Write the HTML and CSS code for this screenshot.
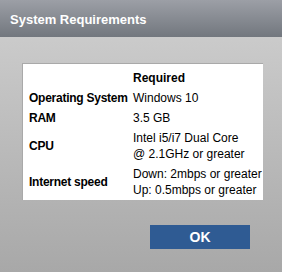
FILE: index.html
```html
<!DOCTYPE html>
<html lang="en">

<head>
    <meta charset="UTF-8" />
    <title>System Requirements</title>
    <meta name="viewport" content="width=device-width, initial-scale=1" />
    <link rel="stylesheet" href="styles.css">
</head>

<body>
    <div class="dialog">
        <div class="titlebar">System Requirements</div>

        <div class="painel">
            <table class="reqs">
                <tr>
                    <th></th>
                    <th class="col-head">Required</th>
                </tr>
                <tr>
                    <th>Operating System</th>
                    <td>Windows 10</td>
                </tr>
                <tr>
                    <th>RAM</th>
                    <td>3.5 GB</td>
                </tr>
                <tr>
                    <th>CPU</th>
                    <td>Intel i5/i7 Dual Core<br>@ 2.1GHz or greater</td>
                </tr>
                <tr>
                    <th>Internet speed</th>
                    <td>Down: 2mbps or greater<br>Up: 0.5mbps or greater</td>
                </tr>
            </table>
        </div>

        <div class="acoes">
            <button class="btn-ok">OK</button>
        </div>
    </div>
</body>

</html>
```

FILE: styles.css
```css
body,
html {
    margin: 0;
    padding: 0;
    height: 100%;
    font-family: "Liberation Sans", Arial, sans-serif;
    color: #000;
}

.dialog {
    width: 282px;
    height: 272px;
    background: linear-gradient(#d0d0d0, #a8a8a8);
}

.titlebar {
    height: 37px;
    box-sizing: border-box;
    padding: 12px 0 0 10px;
    font-size: 13px;
    font-weight: bold;
    color: #fff;
    background: linear-gradient(#9c9fa6, #72777e);
}

.painel {
    margin: 26px 0 0 22px;
    width: 241px;
    height: 137px;
    box-sizing: border-box;
    background: #fff;
    border-top: 1px solid #a9a9a9;
    border-left: 1px solid #a9a9a9;
    padding: 4px 0 0 6px;
}

.reqs {
    border-collapse: collapse;
    font-size: 12px;
    line-height: 16px;
    white-space: nowrap;
}

.reqs th,
.reqs td {
    padding: 2px 0;
    text-align: left;
    vertical-align: middle;
}

.reqs th {
    font-weight: bold;
    width: 104px;
    letter-spacing: -0.25px;
}

.reqs th.col-head {
    letter-spacing: 0;
}

.acoes {
    padding: 25px 0 0 150px;
}

.btn-ok {
    width: 100px;
    height: 24px;
    border: none;
    background-color: #2f5b93;
    color: #fff;
    font-family: "Liberation Sans", Arial, sans-serif;
    font-size: 14px;
    font-weight: bold;
    padding: 0;
}
```
